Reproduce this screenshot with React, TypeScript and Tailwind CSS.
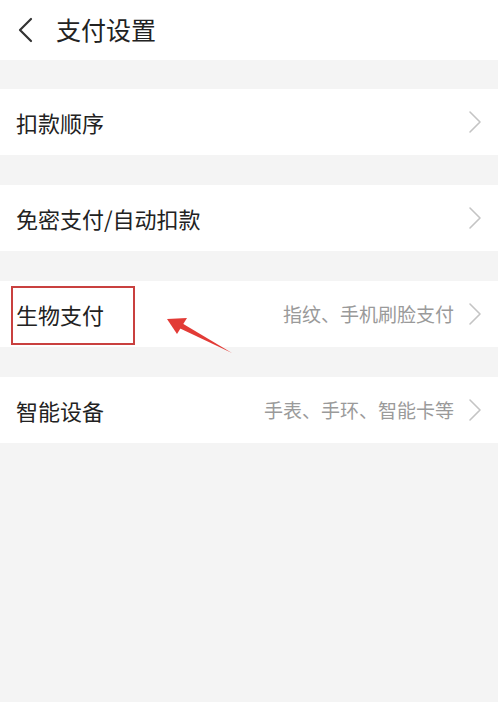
import React from 'react';

const font = { fontFamily: '"Noto Sans CJK SC", "Noto Sans", sans-serif' };

const Chevron = () => (
  <svg width="14" height="24" viewBox="0 0 14 24" fill="none" className="shrink-0">
    <path d="M2 2 L12 12 L2 22" stroke="#c4c4c4" strokeWidth="1.6" strokeLinecap="round" strokeLinejoin="round" />
  </svg>
);

interface RowProps {
  label: string;
  hint?: string;
  children?: React.ReactNode;
}

const Row: React.FC<RowProps> = ({ label, hint, children }) => (
  <div className="relative h-[66px] bg-white flex items-center pl-4 pr-4">
    <span className="text-[22px] text-[#222] flex-1">{label}</span>
    {hint && <span className="text-[19px] text-[#9a9a9a] mr-[14px]">{hint}</span>}
    <Chevron />
    {children}
  </div>
);

export default function App() {
  return (
    <div className="w-[498px] h-[702px] bg-[#f4f4f4] overflow-hidden" style={font}>
      <div className="h-[60px] bg-white flex items-center">
        <svg width="20" height="28" viewBox="0 0 20 28" fill="none" className="ml-[15px]">
          <path d="M16 3 L5 14 L16 25" stroke="#333" strokeWidth="2.2" strokeLinecap="round" strokeLinejoin="round" />
        </svg>
        <span className="ml-[21px] text-[25px] text-[#222]">支付设置</span>
      </div>

      <div className="flex flex-col gap-[30px] pt-[29px]">
        <Row label="扣款顺序" />
        <Row label="免密支付/自动扣款" />
        <Row label="生物支付" hint="指纹、手机刷脸支付">
          <div className="absolute left-[11px] top-[5px] w-[124px] h-[59px] border-2 border-[#c9403f]" />
          <svg className="absolute left-[160px] top-[30px]" width="80" height="50" viewBox="0 0 80 50">
            <path d="M72 42 L20 11 L17 16 Z" fill="#e23b36" />
            <path d="M7 8 L27 7 L17 23 Z" fill="#e23b36" />
          </svg>
        </Row>
        <Row label="智能设备" hint="手表、手环、智能卡等" />
      </div>
    </div>
  );
}
